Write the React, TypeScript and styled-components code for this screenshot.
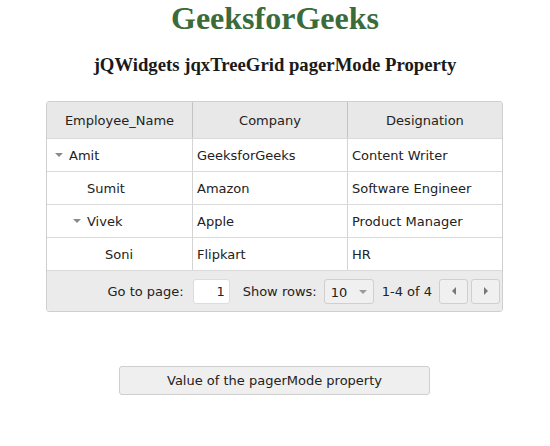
import React from "react";
import styled, { createGlobalStyle } from "styled-components";

const Global = createGlobalStyle`
  html, body { margin: 0; padding: 0; background: #fff; }
  body { width: 550px; height: 446px; overflow: hidden; }
`;

const Page = styled.div`
  display: flex;
  flex-direction: column;
  align-items: center;
  padding-top: 1px;
`;

const Title = styled.h1`
  margin: 0;
  font-family: "Liberation Serif", "Times New Roman", serif;
  font-weight: bold;
  font-size: 32px;
  line-height: 34px;
  color: #3b6b3b;
`;

const Subtitle = styled.h3`
  margin: 19px 0 0 0;
  font-family: "Liberation Serif", "Times New Roman", serif;
  font-weight: bold;
  font-size: 18.72px;
  line-height: 22px;
  color: #1a1a1a;
`;

const Grid = styled.div`
  margin-top: 25px;
  width: 457px;
  box-sizing: border-box;
  border: 1px solid #cfcfcf;
  border-radius: 3px;
  overflow: hidden;
  font-family: "DejaVu Sans", Verdana, sans-serif;
  font-size: 13px;
  color: #222;
  margin-left: -1px;
`;

const Row = styled.div<{ $header?: boolean }>`
  display: grid;
  grid-template-columns: 146px 155px 154px;
  height: ${(p) => (p.$header ? 37 : 33)}px;
  background: ${(p) => (p.$header ? "#e8e8e8" : "#fff")};
  border-bottom: 1px solid #dadada;
  box-sizing: border-box;
`;

const Cell = styled.div<{ $header?: boolean; $last?: boolean }>`
  display: flex;
  align-items: center;
  justify-content: ${(p) => (p.$header ? "center" : "flex-start")};
  padding-left: ${(p) => (p.$header ? 0 : 4)}px;
  border-right: ${(p) => (p.$last ? "none" : p.$header ? "1px solid #c4c4c4" : "1px solid #d4d4d4")};
  box-sizing: border-box;
  white-space: nowrap;
  padding-top: 1px;
`;

const NameCell = styled(Cell)<{ $level: number }>`
  padding-left: ${(p) => 8 + p.$level * 18}px;
`;

const Toggle = styled.span<{ $show: boolean }>`
  display: inline-block;
  width: 14px;
  height: 8px;
  position: relative;
  &::before {
    content: "";
    display: ${(p) => (p.$show ? "block" : "none")};
    position: absolute;
    left: 0;
    top: 1px;
    border-left: 4px solid transparent;
    border-right: 4px solid transparent;
    border-top: 4px solid #8a8a8a;
  }
`;

const Spacer = styled.span`
  display: inline-block;
  width: 14px;
`;

const Pager = styled.div`
  height: 40px;
  background: #ebebeb;
  display: flex;
  align-items: center;
  justify-content: flex-end;
  padding-right: 2px;
  box-sizing: border-box;
`;

const Label = styled.span<{ $ml?: number }>`
  margin-left: ${(p) => p.$ml ?? 0}px;
  color: #222;
`;

const PageInput = styled.div`
  width: 37px;
  height: 25px;
  box-sizing: border-box;
  margin-left: 9px;
  background: #fff;
  border: 1px solid #dcdcdc;
  border-radius: 3px;
  display: flex;
  align-items: center;
  justify-content: flex-end;
  padding-right: 4px;
  padding-top: 1px;
`;

const Dropdown = styled.div`
  width: 50px;
  height: 25px;
  box-sizing: border-box;
  margin-left: 7px;
  background: #f0f0f0;
  border: 1px solid #cfcfcf;
  border-radius: 3px;
  display: flex;
  align-items: center;
  padding-left: 6px;
  padding-top: 3px;
  position: relative;
  &::after {
    content: "";
    position: absolute;
    right: 6px;
    top: 10px;
    border-left: 4px solid transparent;
    border-right: 4px solid transparent;
    border-top: 4px solid #9a9a9a;
  }
`;

const NavButton = styled.div<{ $dir: "left" | "right"; $first?: boolean }>`
  width: 29px;
  height: 25px;
  box-sizing: border-box;
  margin-left: ${(p) => (p.$first ? 7 : 3)}px;
  background: #f0f0f0;
  border: 1px solid #cfcfcf;
  border-radius: 3px;
  display: flex;
  align-items: center;
  justify-content: center;
  &::before {
    content: "";
    border-top: 4px solid transparent;
    border-bottom: 4px solid transparent;
    ${(p) => (p.$dir === "left" ? "border-right: 4px solid #777;" : "border-left: 4px solid #777;")}
  }
`;

const ValueButton = styled.button`
  margin-top: 54px;
  width: 311px;
  height: 29px;
  box-sizing: border-box;
  background: #efefef;
  border: 1px solid #cfcfcf;
  border-radius: 3px;
  font-family: "DejaVu Sans", Verdana, sans-serif;
  font-size: 13px;
  color: #222;
  padding: 0;
  margin-left: -1px;
`;

type Rec = { name: string; company: string; role: string; level: number; expandable: boolean };

const data: Rec[] = [
  { name: "Amit", company: "GeeksforGeeks", role: "Content Writer", level: 0, expandable: true },
  { name: "Sumit", company: "Amazon", role: "Software Engineer", level: 1, expandable: false },
  { name: "Vivek", company: "Apple", role: "Product Manager", level: 1, expandable: true },
  { name: "Soni", company: "Flipkart", role: "HR", level: 2, expandable: false },
];

export default function App() {
  return (
    <>
      <Global />
      <Page>
        <Title>GeeksforGeeks</Title>
        <Subtitle>jQWidgets jqxTreeGrid pagerMode Property</Subtitle>
        <Grid>
          <Row $header>
            <Cell $header>Employee_Name</Cell>
            <Cell $header>Company</Cell>
            <Cell $header $last>Designation</Cell>
          </Row>
          {data.map((r) => (
            <Row key={r.name}>
              <NameCell $level={r.level}>
                {r.expandable ? <Toggle $show /> : <Spacer />}
                {r.name}
              </NameCell>
              <Cell>{r.company}</Cell>
              <Cell $last>{r.role}</Cell>
            </Row>
          ))}
          <Pager>
            <Label>Go to page:</Label>
            <PageInput>1</PageInput>
            <Label $ml={13}>Show rows:</Label>
            <Dropdown>10</Dropdown>
            <Label $ml={8}>1-4 of 4</Label>
            <NavButton $dir="left" $first />
            <NavButton $dir="right" />
          </Pager>
        </Grid>
        <ValueButton>Value of the pagerMode property</ValueButton>
      </Page>
    </>
  );
}
